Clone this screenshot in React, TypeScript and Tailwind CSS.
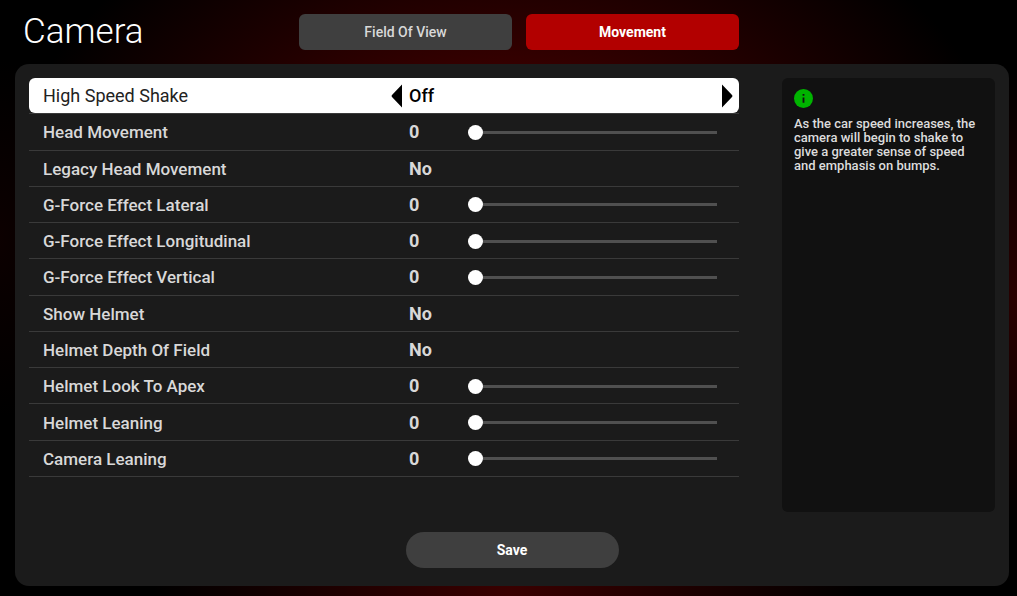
import { useState } from "react";

type Setting = {
  id: string;
  label: string;
  kind: "option" | "toggle" | "slider";
};

const settings: Setting[] = [
  { id: "high-speed-shake", label: "High Speed Shake", kind: "option" },
  { id: "head-movement", label: "Head Movement", kind: "slider" },
  { id: "legacy-head-movement", label: "Legacy Head Movement", kind: "toggle" },
  { id: "g-force-lateral", label: "G-Force Effect Lateral", kind: "slider" },
  { id: "g-force-longitudinal", label: "G-Force Effect Longitudinal", kind: "slider" },
  { id: "g-force-vertical", label: "G-Force Effect Vertical", kind: "slider" },
  { id: "show-helmet", label: "Show Helmet", kind: "toggle" },
  { id: "helmet-dof", label: "Helmet Depth Of Field", kind: "toggle" },
  { id: "helmet-apex", label: "Helmet Look To Apex", kind: "slider" },
  { id: "helmet-leaning", label: "Helmet Leaning", kind: "slider" },
  { id: "camera-leaning", label: "Camera Leaning", kind: "slider" },
];

const shakeOptions = ["Off", "Low", "Medium", "High"];

function OptionRow({ setting }: { setting: Setting }) {
  const [index, setIndex] = useState(0);
  const step = (by: number) => setIndex((index + by + shakeOptions.length) % shakeOptions.length);

  return (
    <div role="group" aria-labelledby={setting.id} className="flex border-b border-[#3a3a3a]">
      <div className="flex w-full items-center rounded-md bg-white pr-[6px] pl-[14px] text-lg leading-6 text-black">
        <span id={setting.id} className="w-[348px] text-[#222]">{setting.label}</span>
        <button type="button" aria-label="Previous" onClick={() => step(-1)} className="w-[18px]">
          <svg viewBox="0 0 11 24" className="h-6 w-[11px]"><path d="M11 0.5v23L1 13q-1-1 0-2z" /></svg>
        </button>
        <span className="flex-1 font-medium">{shakeOptions[index]}</span>
        <button type="button" aria-label="Next" onClick={() => step(1)}>
          <svg viewBox="0 0 11 24" className="h-6 w-[11px]"><path d="M0 0.5v23L10 13q1-1 0-2z" /></svg>
        </button>
      </div>
    </div>
  );
}

function ToggleRow({ setting }: { setting: Setting }) {
  const [on, setOn] = useState(false);

  return (
    <div className="flex items-center border-b border-[#3a3a3a] pt-px pr-[22px] pl-[14px]">
      <span id={setting.id} className="w-[366px] font-medium">{setting.label}</span>
      <button type="button" aria-labelledby={setting.id} aria-pressed={on} onClick={() => setOn(!on)} className="flex-1 text-left text-lg leading-6 font-bold">
        {on ? "Yes" : "No"}
      </button>
    </div>
  );
}

function SliderRow({ setting }: { setting: Setting }) {
  const [value, setValue] = useState(0);

  return (
    <div className="flex items-center border-b border-[#3a3a3a] pt-px pr-[22px] pl-[14px]">
      <label htmlFor={setting.id} className="w-[366px] font-medium">{setting.label}</label>
      <output htmlFor={setting.id} className="w-[59px] text-lg leading-6 font-bold">{value}</output>
      <input
        id={setting.id}
        type="range"
        min={0}
        max={100}
        value={value}
        onChange={(e) => setValue(Number(e.target.value))}
        className="h-[14px] min-w-0 flex-1 appearance-none bg-transparent [&::-webkit-slider-runnable-track]:h-[3px] [&::-webkit-slider-runnable-track]:bg-[#505050] [&::-webkit-slider-thumb]:-mt-[6px] [&::-webkit-slider-thumb]:size-[15px] [&::-webkit-slider-thumb]:appearance-none [&::-webkit-slider-thumb]:rounded-full [&::-webkit-slider-thumb]:bg-white"
      />
    </div>
  );
}

export default function App() {
  return (
    <div className="flex min-h-screen flex-col bg-black bg-[radial-gradient(ellipse_48%_50%_at_50%_28%,#500000,transparent),radial-gradient(ellipse_35%_50%_at_50%_100%,#3a0000,transparent),radial-gradient(ellipse_10%_38%_at_100%_50%,#2a0000,transparent),radial-gradient(ellipse_8%_30%_at_0%_40%,#0c0000,transparent)] pr-2 pb-[10px] pl-[15px] font-[Roboto,sans-serif] text-[#d8d8d8]">
      <header className="grid grid-cols-[1fr_213px] gap-[43px] px-[14px] py-[14px]">
        <div className="flex items-center justify-between">
          <h1 className="-ml-[6px] text-[35px] leading-[36px] font-light text-white">Camera</h1>
          <nav className="flex gap-[14px] text-sm">
            <button type="button" className="h-9 w-[213px] rounded-md bg-[#3f3f3f] font-medium">Field Of View</button>
            <button type="button" aria-current="page" className="h-9 w-[213px] rounded-md bg-[#b20000] font-bold text-white">Movement</button>
          </nav>
        </div>
      </header>

      <main className="flex flex-1 flex-col rounded-[14px] bg-[#1b1b1b] px-[14px] pt-[14px] pb-[18px]">
        <div className="grid flex-1 grid-cols-[1fr_213px] gap-[43px]">
          <section className="grid h-[399px] auto-rows-fr text-[17px] leading-6">
            {settings.map((setting) => {
              if (setting.kind === "option") return <OptionRow key={setting.id} setting={setting} />;
              if (setting.kind === "toggle") return <ToggleRow key={setting.id} setting={setting} />;
              return <SliderRow key={setting.id} setting={setting} />;
            })}
          </section>
          <aside className="rounded-md bg-[#111] p-3 text-[#dcdcdc]">
            <svg viewBox="0 0 20 20" className="-mt-px size-5">
              <circle cx="9.5" cy="9.5" r="9.5" fill="#00b400" />
              <path d="M8.6 5h1.8v1.8H8.6zM8.6 8.4h1.8v5.4H8.6z" fill="#111" />
            </svg>
            <p className="mt-2 text-[13px] leading-[14px] font-medium">
              As the car speed increases, the camera will begin to shake to give a greater sense of speed and emphasis on bumps.
            </p>
          </aside>
        </div>
        <button type="button" className="mt-5 h-9 w-[213px] self-center rounded-full bg-[#3f3f3f] text-sm font-bold text-white">Save</button>
      </main>
    </div>
  );
}
